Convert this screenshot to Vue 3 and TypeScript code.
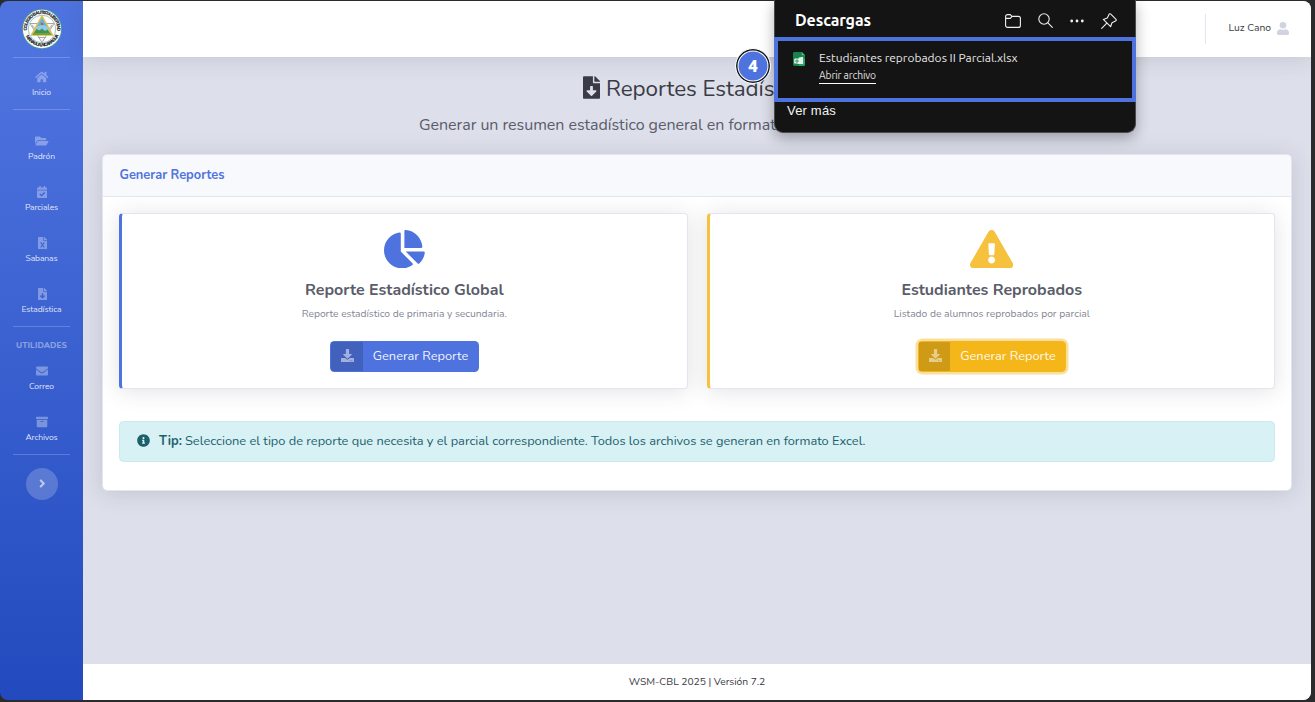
<script setup lang="ts">
interface Glyph { w: number; d: string }
interface NavItem { label: string; icon: string; width: number }

const glyphs: Record<string, Glyph> = {
  home: { w: 576, d: 'M280.37 148.26L96 300.11V464a16 16 0 0 0 16 16l112.06-.29a16 16 0 0 0 15.92-16V368a16 16 0 0 1 16-16h64a16 16 0 0 1 16 16v95.64a16 16 0 0 0 16 16.05L464 480a16 16 0 0 0 16-16V300L295.67 148.26a12.19 12.19 0 0 0-15.3 0zM571.6 251.47L488 182.56V44.05a12 12 0 0 0-12-12h-56a12 12 0 0 0-12 12v72.61L318.47 43a48 48 0 0 0-61 0L4.34 251.47a12 12 0 0 0-1.6 16.9l25.5 31A12 12 0 0 0 45.15 301l235.22-193.74a12.19 12.19 0 0 1 15.3 0L530.9 301a12 12 0 0 0 16.9-1.6l25.5-31a12 12 0 0 0-1.7-16.93z' },
  folder: { w: 576, d: 'M572.694 292.093L500.27 416.248A63.997 63.997 0 0 1 444.989 448H45.025c-18.523 0-30.064-20.093-20.731-36.093l72.424-124.155A64 64 0 0 1 152 256h399.964c18.523 0 30.064 20.093 20.73 36.093zM152 224h328v-48c0-26.51-21.49-48-48-48H272l-64-64H48C21.49 64 0 85.49 0 112v278.046l69.077-118.418C86.214 242.25 117.989 224 152 224z' },
  calendar: { w: 448, d: 'M436 160H12c-6.627 0-12-5.373-12-12v-36c0-26.51 21.49-48 48-48h48V12c0-6.627 5.373-12 12-12h40c6.627 0 12 5.373 12 12v52h128V12c0-6.627 5.373-12 12-12h40c6.627 0 12 5.373 12 12v52h48c26.51 0 48 21.49 48 48v36c0 6.627-5.373 12-12 12zM12 192h424c6.627 0 12 5.373 12 12v260c0 26.51-21.49 48-48 48H48c-26.51 0-48-21.49-48-48V204c0-6.627 5.373-12 12-12zm333.296 95.947l-28.169-28.398c-4.667-4.705-12.265-4.736-16.97-.068L194.12 364.665l-45.98-46.352c-4.667-4.705-12.266-4.736-16.971-.068l-28.397 28.17c-4.705 4.667-4.736 12.265-.068 16.97l82.601 83.269c4.667 4.705 12.265 4.736 16.97.068l142.953-141.805c4.705-4.667 4.736-12.265.068-16.97z' },
  excel: { w: 384, d: 'M224 136V0H24C10.7 0 0 10.7 0 24v464c0 13.3 10.7 24 24 24h336c13.3 0 24-10.7 24-24V160H248c-13.2 0-24-10.8-24-24zm60.1 106.5L224 336l60.1 93.5c5.1 8-.6 18.5-10.1 18.5h-34.9c-4.4 0-8.5-2.4-10.6-6.3C208.9 405.5 192 373 192 373c-6.4 14.8-10 20-36.6 68.8-2.1 3.9-6.1 6.3-10.5 6.3H110c-9.5 0-15.2-10.5-10.1-18.5l60.3-93.5-60.3-93.5c-5.2-8 .6-18.5 10.1-18.5h34.8c4.4 0 8.5 2.4 10.6 6.3 26.1 48.8 20 33.6 36.6 68.5 0 0 6.1-11.7 36.6-68.5 2.1-3.9 6.2-6.3 10.6-6.3H274c9.5-.1 15.2 10.4 10.1 18.4zM384 121.9v6.1H256V0h6.1c6.4 0 12.5 2.5 17 7l97.9 98c4.5 4.5 7 10.6 7 16.9z' },
  fileDown: { w: 384, d: 'M224 136V0H24C10.7 0 0 10.7 0 24v464c0 13.3 10.7 24 24 24h336c13.3 0 24-10.7 24-24V160H248c-13.2 0-24-10.8-24-24zm76.45 211.36l-96.42 95.7c-6.65 6.61-17.39 6.61-24.04 0l-96.42-95.7C73.42 337.29 80.54 320 94.82 320H160v-80c0-8.84 7.16-16 16-16h32c8.84 0 16 7.16 16 16v80h65.18c14.28 0 21.4 17.29 11.27 27.36zM377 105L279.1 7c-4.5-4.5-10.6-7-17-7H256v128h128v-6.1c0-6.3-2.5-12.4-7-16.9z' },
  envelope: { w: 512, d: 'M502.3 190.8c3.9-3.1 9.7-.2 9.7 4.7V400c0 26.5-21.5 48-48 48H48c-26.5 0-48-21.5-48-48V195.6c0-5 5.7-7.8 9.7-4.7 22.4 17.4 52.1 39.5 154.1 113.6 21.1 15.4 56.7 47.8 92.2 47.6 35.7.3 72-32.8 92.3-47.6 102-74.1 131.6-96.3 154-113.7zM256 320c23.2.4 56.6-29.2 73.4-41.4 132.7-96.3 142.8-104.7 173.4-128.7 5.8-4.5 9.2-11.5 9.2-18.9v-19c0-26.5-21.5-48-48-48H48c-26.5 0-48 21.5-48 48v19c0 7.4 3.4 14.3 9.2 18.9 30.6 23.9 40.7 32.4 173.4 128.7 16.8 12.2 50.2 41.8 73.4 41.4z' },
  archive: { w: 512, d: 'M32 448c0 17.7 14.3 32 32 32h384c17.7 0 32-14.3 32-32V160H32v288zm160-212c0-6.6 5.4-12 12-12h104c6.6 0 12 5.4 12 12v8c0 6.6-5.4 12-12 12H204c-6.6 0-12-5.4-12-12v-8zM480 32H32C14.3 32 0 46.3 0 64v48c0 8.8 7.2 16 16 16h480c8.8 0 16-7.2 16-16V64c0-17.7-14.3-32-32-32z' },
  angle: { w: 256, d: 'M224.3 273l-136 136c-9.4 9.4-24.6 9.4-33.9 0l-22.6-22.6c-9.4-9.4-9.4-24.6 0-33.9l96.4-96.4-96.4-96.4c-9.4-9.4-9.4-24.6 0-33.9L54.3 103c9.4-9.4 24.6-9.4 33.9 0l136 136c9.5 9.4 9.5 24.6.1 34z' },
  pie: { w: 544, d: 'M527.79 288H290.5l158.03 158.03c6.04 6.04 15.98 6.53 22.19.68 38.7-36.46 65.32-85.61 73.13-140.86 1.34-9.46-6.51-17.85-16.06-17.85zm-15.83-64.8C503.72 103.74 408.26 8.28 288.8.04 279.68-.59 272 7.1 272 16.24V240h223.77c9.14 0 16.82-7.68 16.19-16.8zM224 288V50.71c0-9.55-8.39-17.4-17.84-16.06C86.99 51.49-4.1 155.6.14 280.37 4.5 408.51 114.83 513.59 243.03 511.98c50.4-.63 96.97-16.87 135.26-44.03 7.9-5.6 8.42-17.23 1.57-24.08L224 288z' },
  warning: { w: 576, d: 'M569.517 440.013C587.975 472.007 564.806 512 527.94 512H48.054c-36.937 0-59.999-40.055-41.577-71.987L246.423 23.985c18.467-32.009 64.72-31.951 83.154 0l239.94 416.028zM288 354c-25.405 0-46 20.595-46 46s20.595 46 46 46 46-20.595 46-46-20.595-46-46-46zm-43.673-165.346l7.418 136c.347 6.364 5.609 11.346 11.982 11.346h48.546c6.373 0 11.635-4.982 11.982-11.346l7.418-136c.375-6.874-5.098-12.654-11.982-12.654h-63.383c-6.884 0-12.356 5.78-11.981 12.654z' },
  download: { w: 512, d: 'M216 0h80c13.3 0 24 10.7 24 24v168h87.7c17.8 0 26.7 21.5 14.1 34.1L269.7 378.3c-7.5 7.5-19.8 7.5-27.3 0L90.1 226.1c-12.6-12.6-3.7-34.1 14.1-34.1H192V24c0-13.3 10.7-24 24-24zm296 376v112c0 13.3-10.7 24-24 24H24c-13.3 0-24-10.7-24-24V376c0-13.3 10.7-24 24-24h146.7l49 49c20.1 20.1 52.5 20.1 72.6 0l49-49H488c13.3 0 24 10.7 24 24zm-124 88c0-11-9-20-20-20s-20 9-20 20 9 20 20 20 20-9 20-20zm64 0c0-11-9-20-20-20s-20 9-20 20 9 20 20 20 20-9 20-20z' },
  info: { w: 512, d: 'M256 8C119.043 8 8 119.083 8 256c0 136.997 111.043 248 248 248s248-111.003 248-248C504 119.083 392.957 8 256 8zm0 110c23.196 0 42 18.804 42 42s-18.804 42-42 42-42-18.804-42-42 18.804-42 42-42zm56 254c0 6.627-5.373 12-12 12h-88c-6.627 0-12-5.373-12-12v-24c0-6.627 5.373-12 12-12h12v-64h-12c-6.627 0-12-5.373-12-12v-24c0-6.627 5.373-12 12-12h64c6.627 0 12 5.373 12 12v100h12c6.627 0 12 5.373 12 12v24z' },
}

const box = (name: string): string => `0 0 ${glyphs[name].w} 512`

const groups: { title?: string; gap: boolean; items: NavItem[] }[] = [
  { gap: false, items: [{ label: 'Inicio', icon: 'home', width: 19 }] },
  {
    gap: true,
    items: [
      { label: 'Padrón', icon: 'folder', width: 27 },
      { label: 'Parciales', icon: 'calendar', width: 33 },
      { label: 'Sabanas', icon: 'excel', width: 32 },
      { label: 'Estadística', icon: 'fileDown', width: 40 },
    ],
  },
  {
    title: 'UTILIDADES',
    gap: false,
    items: [
      { label: 'Correo', icon: 'envelope', width: 25 },
      { label: 'Archivos', icon: 'archive', width: 32 },
    ],
  },
]

const reports = [
  { kind: 'primary', icon: 'pie', title: 'Reporte Estadístico Global', titleWidth: 198.5, text: 'Reporte estadístico de primaria y secundaria.', textWidth: 205 },
  { kind: 'warning', icon: 'warning', title: 'Estudiantes Reprobados', titleWidth: 180.5, text: 'Listado de alumnos reprobados por parcial', textWidth: 196 },
]

// Tracks a label out (or in) so that it spans the given number of pixels.
const vFit = {
  mounted(el: HTMLElement, binding: { value: number }) {
    const chars = (el.textContent ?? '').length
    const natural = el.getBoundingClientRect().width
    if (chars > 0) el.style.letterSpacing = `${(binding.value - natural) / chars}px`
  },
}
</script>

<template>
  <div class="frame">
    <div class="window">
      <aside class="sidebar">
        <div class="brand">
          <svg width="40" height="40" viewBox="0 0 80 80">
            <defs>
              <path id="ringTop" d="M10.5 48 A30.5 30.5 0 1 1 69.5 48" />
              <path id="ringBottom" d="M5 47 A36 36 0 0 0 75 47" />
            </defs>
            <circle cx="40" cy="40" r="40" fill="#4c9aa0" />
            <circle cx="40" cy="40" r="38.300" fill="#fbfcfa" />
            <text class="seal"><textPath href="#ringTop" startOffset="5" textLength="102">COLEGIO BAUTISTA LIBERTAD</textPath></text>
            <text class="seal"><textPath href="#ringBottom" startOffset="8" textLength="82">MANAGUA, NICARAGUA</textPath></text>
            <circle cx="40" cy="40" r="27.500" fill="#fff" stroke="#6fa4a6" stroke-width="1.300" />
            <path d="M16 29H64L40 67Z" fill="#f6f6f6" stroke="#8d9494" stroke-width="1.600" />
            <path d="M20 32l8 10M60 32l-8 10M32 57h16" stroke="#999" stroke-width="1.600" />
            <path d="M40 14L61 52H19Z" fill="#8dcbea" stroke="#e6bd3d" stroke-width="3" />
            <path d="M30 35l10-17 10 17-10-4z" fill="#58b6df" />
            <path d="M22 51l7-11 6 3 5-4 6 5 5-3 7 10z" fill="#45934b" />
            <path d="M23 48h34l2 4H21z" fill="#6ca344" />
            <circle cx="40" cy="30" r="2.600" fill="#e24c3e" />
          </svg>
        </div>
        <template v-for="(group, g) in groups" :key="g">
          <div class="rule" :class="{ spaced: group.gap }"></div>
          <div v-if="group.title" class="heading"><span v-fit="51">{{ group.title }}</span></div>
          <div v-for="item in group.items" :key="item.label" class="nav">
            <svg class="nav-icon" :viewBox="box(item.icon)"><path :d="glyphs[item.icon].d" /></svg>
            <span v-fit="item.width">{{ item.label }}</span>
          </div>
        </template>
        <div class="rule"></div>
        <div class="toggle"><svg :viewBox="box('angle')"><path :d="glyphs.angle.d" /></svg></div>
      </aside>

      <div class="page">
        <header class="topbar">
          <div class="divider"></div>
          <span v-fit="42.5" class="user">Luz Cano</span>
          <svg class="avatar" viewBox="0 0 12 13"><circle cx="6" cy="3.3" r="3.3" /><path d="M0 11.6V10.8C0 8.7 1.6 7.3 3.5 7.3c1.6.7 3.4.7 5 0C10.4 7.3 12 8.7 12 10.8v.8c0 .8-.5 1.4-1.3 1.4H1.3C.5 13 0 12.400 0 11.600z" /></svg>
        </header>

        <main class="content">
          <h1 class="title">
            <svg :viewBox="box('fileDown')"><path :d="glyphs.fileDown.d" /></svg>
            <span v-fit="168.5">Reportes Estadís</span><span>ticos</span>
          </h1>
          <p class="lead"><span v-fit="365.5">Generar un resumen estadístico general en formato</span></p>

          <section class="card">
            <div class="card-head"><span v-fit="105">Generar Reportes</span></div>
            <div class="card-body">
              <div class="grid">
                <article v-for="report in reports" :key="report.kind" class="report" :class="report.kind">
                  <svg class="report-icon" :viewBox="box(report.icon)"><path :d="glyphs[report.icon].d" /></svg>
                  <h2><span v-fit="report.titleWidth">{{ report.title }}</span></h2>
                  <p><span v-fit="report.textWidth">{{ report.text }}</span></p>
                  <button type="button" class="btn">
                    <span class="btn-icon"><svg viewBox="0 0 512 512"><path :d="glyphs.download.d" /></svg></span>
                    <span class="btn-text"><span v-fit="95.5">Generar Reporte</span></span>
                  </button>
                </article>
              </div>
              <div class="tip">
                <svg viewBox="0 0 512 512"><path :d="glyphs.info.d" /></svg>
                <strong v-fit="23">Tip:</strong>
                <span v-fit="680.5">Seleccione el tipo de reporte que necesita y el parcial correspondiente. Todos los archivos se generan en formato Excel.</span>
              </div>
            </div>
          </section>
        </main>

        <footer class="footer"><span v-fit="136.5">WSM-CBL 2025 | Versión 7.2</span></footer>
      </div>
    </div>

    <div class="downloads">
      <div class="dl-head">
        <span v-fit="76" class="dl-title">Descargas</span>
        <svg width="16" height="14" viewBox="0 0 16 14"><path d="M.6 4.700V2.600A2 2 0 0 1 2.600.6H5.300L7 2.400H13.400A2 2 0 0 1 15.400 4.400V11.400A2 2 0 0 1 13.400 13.400H2.600A2 2 0 0 1 .6 11.400zM.6 4.400H5.300L7 2.400" /></svg>
        <svg width="15" height="15" viewBox="0 0 15 15"><circle cx="6" cy="6" r="5.200" /><path d="M9.700 9.700L14.300 14.300" /></svg>
        <svg class="dots" width="14" height="4" viewBox="0 0 14 4"><circle cx="1.700" cy="2" r="1.400" /><circle cx="7" cy="2" r="1.400" /><circle cx="12.300" cy="2" r="1.400" /></svg>
        <svg width="16" height="16" viewBox="0 0 16 16"><path d="M9.800 1.200L14.800 6.200C15.500 6.900 15.300 7.600 14.500 8L11 9.700L9.600 13.700L2.300 6.400L6.300 5L8 1.500C8.400.7 9.100.5 9.800 1.200zM5.800 10.200L.7 15.300" /></svg>
      </div>
      <div class="dl-item">
        <svg width="12" height="14" viewBox="0 0 13 15">
          <path d="M1.500 0H9.500L13 3.500V13.500Q13 15 11.500 15H1.500Q0 15 0 13.500V1.500Q0 0 1.500 0z" fill="#17834f" />
          <path d="M6.500 7H13V13.500Q13 15 11.500 15H6.500z" fill="#23a366" />
          <path d="M9.500 0L13 3.500H9.500z" fill="#4cc38a" />
          <path d="M6.500 6L11 5V13H5z" fill="#dff3e8" />
          <rect x="1.300" y="7" width="6" height="5.500" rx="1" fill="#e8f6ee" />
          <circle cx="4.300" cy="9.700" r="1.300" fill="none" stroke="#17834f" />
        </svg>
        <div class="dl-file">
          <span v-fit="198.5" class="dl-name">Estudiantes reprobados II Parcial.xlsx</span>
          <span class="dl-open"><span v-fit="57">Abrir archivo</span></span>
        </div>
      </div>
      <div class="dl-more"><span v-fit="49">Ver más</span></div>
    </div>
    <div class="step">4</div>
  </div>
</template>

<style>
body { background: #2b2b2b; overflow: hidden; }
</style>

<style scoped>
* { box-sizing: border-box; }
.frame {
  position: relative;
  width: 1315px;
  height: 702px;
  padding: 1px 4px 2px 0;
  background: #2b2b2d;
  font-family: Nunito, Lato, "Open Sans", sans-serif;
}
.frame span, .frame strong { white-space: nowrap; }
.window {
  display: flex;
  height: 699px;
  border-radius: 8px;
  overflow: hidden;
}
.sidebar {
  display: flex;
  flex-direction: column;
  align-items: center;
  width: 83px;
  flex: none;
  background: linear-gradient(180deg, #4e73df 10%, #224abe 100%);
}
.brand { height: 56px; padding-top: 8px; }
.brand svg { display: block; }
.seal { font: bold 9px "Liberation Sans", sans-serif; fill: #1b242b; stroke: #1b242b; stroke-width: .3; }
.rule { width: 57px; height: 1px; background: rgba(255, 255, 255, .2); flex: none; }
.rule.spaced { margin-bottom: 12px; }
.heading {
  height: 25px;
  padding-top: 12px;
  line-height: 13px;
  font-size: 8.3px;
  font-weight: 800;
  color: rgba(255, 255, 255, .42);
}
.nav {
  display: flex;
  flex-direction: column;
  align-items: center;
  height: 51px;
  padding-top: 13px;
  font-size: 8.6px;
  line-height: 12px;
  color: rgba(255, 255, 255, .85);
}
.nav-icon { height: 12px; margin: 0 0 3px 1px; fill: rgba(255, 255, 255, .34); flex: none; }
.toggle {
  display: flex;
  align-items: center;
  justify-content: center;
  width: 32px;
  height: 32px;
  margin-top: 13px;
  border-radius: 50%;
  background: rgba(255, 255, 255, .2);
}
.toggle svg { height: 13px; margin: 0 0 2px 1px; fill: rgba(255, 255, 255, .6); }

.page { display: flex; flex-direction: column; flex: 1; background: #dddfeb; }
.topbar {
  display: flex;
  align-items: center;
  justify-content: flex-end;
  height: 56px;
  padding: 0 22px 2px 0;
  background: #fff;
  box-shadow: 0 2px 22px rgba(58, 59, 69, .15);
}
.divider { width: 1px; height: 30px; margin: 2px 23px 0 0; background: #e3e6f0; }
.user { margin-right: 6px; font-size: 10.3px; color: #3a3b45; }
.avatar { width: 12px; height: 13px; margin-top: 1px; fill: #d1d3e2; }

.content { flex: 1; padding: 15px 19px 0; }
.title {
  display: flex;
  align-items: center;
  height: 32px;
  margin: 0;
  padding-left: 480.5px;
  color: #3a3b45;
  font-size: 22.4px;
  font-weight: 400;
}
.title svg { width: 17px; height: 23px; margin: -1px 6.5px 0 0; fill: #3a3b45; }
.lead {
  height: 40px;
  margin: 0;
  padding: 10px 0 0 317px;
  line-height: 22px;
  font-size: 16px;
  color: #5a5c69;
}
.card {
  height: 337px;
  margin-top: 10px;
  border: 1px solid #e3e6f0;
  border-radius: 5px;
  background: #fff;
  background-clip: padding-box;
  box-shadow: 0 2px 22px rgba(58, 59, 69, .17);
}
.card-head {
  height: 42px;
  padding: 11px 16px 0 16.5px;
  border-bottom: 1px solid #e3e6f0;
  border-radius: 4px 4px 0 0;
  background: #f8f9fc;
  color: #4e73df;
  font-size: 12.8px;
  line-height: 19px;
  font-weight: 700;
}
.card-body { padding: 16px; }
.grid { display: grid; grid-template-columns: 1fr 1fr; gap: 19px; }
.report {
  display: flex;
  flex-direction: column;
  align-items: center;
  height: 176px;
  padding-top: 16px;
  border: 1px solid #e3e6f0;
  border-left-width: 3px;
  border-radius: 4px;
  background: #fff;
  box-shadow: 0 2px 22px rgba(58, 59, 69, .15);
}
.report.primary { border-left-color: #4e73df; --tone: #4e73df; --fill: #4e73df; }
.report.warning { border-left-color: #f6c23e; --tone: #f6c23e; --fill: #f4b619; }
.report-icon { height: 38.4px; fill: var(--tone); flex: none; }
.report h2 { margin: 12px 0 0; font-size: 16px; line-height: 20px; font-weight: 700; color: #5a5c69; }
.report p { margin: 6px 0 0; font-size: 10.3px; line-height: 16px; color: #858796; }
.btn {
  display: flex;
  width: 149px;
  height: 31px;
  margin: 19px 0 0;
  padding: 1px;
  border: 0;
  border-radius: 4.5px;
  background: var(--fill);
  color: #fff;
  font-family: inherit;
  font-size: 12.8px;
}
.report.warning .btn { width: 148px; margin-left: 1px; box-shadow: 0 0 0 2.5px rgba(246, 194, 62, .5); }
.report.warning .btn-icon { width: 31px; }
.btn-icon {
  display: flex;
  align-items: center;
  justify-content: center;
  width: 32px;
  height: 29px;
  padding-left: 1px;
  background: rgba(0, 0, 0, .15);
}
.btn-icon svg { width: 13px; height: 13px; margin-bottom: 2px; fill: rgba(255, 255, 255, .5); }
.btn-text { padding-left: 10px; line-height: 28px; color: rgba(255, 255, 255, .95); }
.tip {
  display: flex;
  align-items: center;
  height: 41px;
  margin-top: 32px;
  padding: 0 16px 2px 16.5px;
  border: 1px solid #c7ebf1;
  border-radius: 4.5px;
  background: #d7f1f5;
  color: #1c606a;
  font-size: 12.8px;
}
.tip svg { width: 13px; height: 13px; margin: -1px 9.5px 0 0; fill: #1c606a; flex: none; }
.tip strong { margin-right: 3px; }
.footer {
  display: flex;
  align-items: center;
  justify-content: center;
  height: 36px;
  background: #fff;
  color: #3a3b45;
  font-size: 10.3px;
}

.downloads {
  position: absolute;
  left: 774px;
  top: 0;
  width: 362px;
  height: 133px;
  border: 1px solid #4a4a4a;
  border-top: 0;
  border-radius: 0 0 9px 9px;
  background: #141414;
  color: #f2f2f2;
  box-shadow: 0 5px 14px rgba(0, 0, 0, .3);
  font-family: Ubuntu, "Noto Sans", sans-serif;
}
.dl-head { display: flex; align-items: center; height: 37px; padding: 4px 18px 0 20px; }
.dl-title { margin-right: auto; padding-bottom: 1px; font-family: Ubuntu, "Open Sans", sans-serif; font-size: 16px; font-weight: 600; color: #fff; }
.dl-head svg { margin-left: 17px; fill: none; stroke: #f0f0f0; stroke-width: 1.1; stroke-linejoin: round; stroke-linecap: round; }
.dl-head .dots { fill: #f0f0f0; stroke: none; }
.dl-item {
  display: flex;
  height: 65px;
  margin: 0 -1px;
  padding: 11px 14px 0 15px;
  border: 4px solid #4e73df;
}
.dl-file { display: flex; flex-direction: column; align-items: flex-start; margin-left: 14px; }
.dl-name { margin-top: -3px; font-size: 12px; line-height: 18px; color: #e8e8e8; }
.dl-open { margin-top: 1px; border-bottom: 1px solid #fff; font-size: 10.3px; line-height: 15px; color: #e0e0e0; }
.dl-more { padding-left: 12px; line-height: 18px; font-family: "Liberation Sans", sans-serif; font-size: 13px; }
.step {
  position: absolute;
  left: 735px;
  top: 48px;
  display: flex;
  align-items: center;
  justify-content: center;
  width: 36px;
  height: 36px;
  border: 1px solid #fff;
  border-radius: 50%;
  background: #4e73df;
  color: #fff;
  font: 900 17px Roboto, sans-serif;
  box-shadow: inset 0 0 0 1.5px #151515, inset 0 0 0 2.5px #fff;
}
</style>
